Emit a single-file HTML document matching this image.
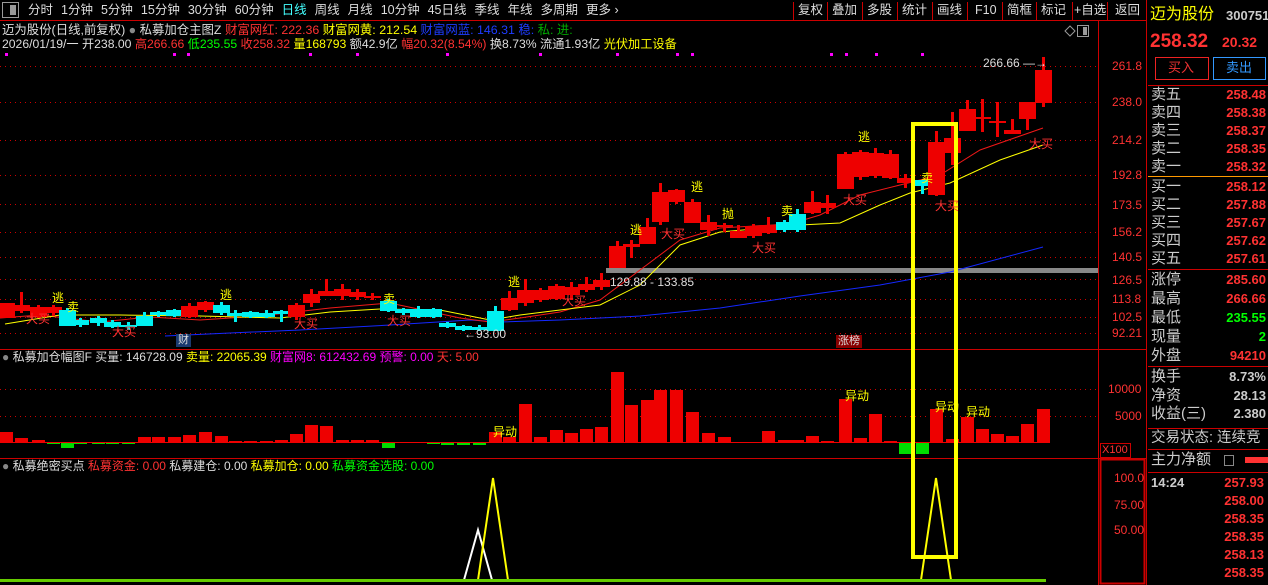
<!DOCTYPE html>
<html><head><meta charset="utf-8"><style>
*{margin:0;padding:0;box-sizing:border-box}
body{width:1268px;height:585px;background:#000;overflow:hidden;position:relative;font-family:"Liberation Sans","Noto Sans CJK SC",sans-serif;font-size:12px;color:#ccc}
.a{position:absolute;white-space:nowrap;line-height:1}
.tb span{margin-right:8px}
.r{color:#ff3232}.y{color:#ffff00}.g{color:#00ff00}.b{color:#1e3cff}.m{color:#ff00ff}.w{color:#ddd}
.ax{position:absolute;left:1112px;color:#ff3232;font-size:12px;line-height:1}
.ob{position:absolute;left:1151px;width:115px;font-size:15px;line-height:1;color:#ccc}
.ob b{position:absolute;right:0;top:1px;font-size:13px;color:#ff3232;font-weight:bold}
.tk{position:absolute;right:4px;font-size:13px;font-weight:bold;color:#ff3232;line-height:1}
.bt{position:absolute;top:4px;font-size:12.5px;color:#ddd;line-height:1}
</style></head><body>
<svg width="1268" height="585" style="position:absolute;left:0;top:0">
<rect x="0" y="0" width="1268" height="585" fill="#000"/>
<line x1="0" y1="20.5" x2="1146" y2="20.5" stroke="#c00" />
<line x1="1098.5" y1="20" x2="1098.5" y2="585" stroke="#c00"/>
<line x1="1146.5" y1="0" x2="1146.5" y2="585" stroke="#c00"/>
<line x1="0" y1="349.5" x2="1146" y2="349.5" stroke="#c00"/>
<line x1="0" y1="458.5" x2="1146" y2="458.5" stroke="#c00"/>
<g stroke="#c00"><line x1="793.5" x2="793.5" y1="2" y2="20"/><line x1="827.5" x2="827.5" y1="2" y2="20"/><line x1="862.5" x2="862.5" y1="2" y2="20"/><line x1="897.5" x2="897.5" y1="2" y2="20"/><line x1="932.5" x2="932.5" y1="2" y2="20"/><line x1="967.5" x2="967.5" y1="2" y2="20"/><line x1="1002.5" x2="1002.5" y1="2" y2="20"/><line x1="1036.5" x2="1036.5" y1="2" y2="20"/><line x1="1072.5" x2="1072.5" y1="2" y2="20"/><line x1="1107.5" x2="1107.5" y1="2" y2="20"/></g>
<rect x="1100.5" y="443.5" width="30" height="14" fill="none" stroke="#c00"/>
<rect x="1100.5" y="459.5" width="44" height="124" fill="none" stroke="#c00" stroke-width="2"/>
<rect x="2.5" y="2.5" width="16" height="15" fill="none" stroke="#999"/>
<rect x="10" y="5" width="6" height="10" fill="#999"/>
<line x1="1148" y1="85.5" x2="1268" y2="85.5" stroke="#c00"/>
<line x1="1148" y1="176.5" x2="1268" y2="176.5" stroke="#f90"/>
<line x1="1148" y1="269.5" x2="1268" y2="269.5" stroke="#c00"/>
<line x1="1148" y1="366.5" x2="1268" y2="366.5" stroke="#c00"/>
<line x1="1148" y1="428.5" x2="1268" y2="428.5" stroke="#c00"/>
<line x1="1148" y1="449.5" x2="1268" y2="449.5" stroke="#c00"/>
<line x1="1148" y1="472.5" x2="1268" y2="472.5" stroke="#c00"/>
<rect x="1155.5" y="57.5" width="53" height="22" fill="none" stroke="#e22"/>
<rect x="1213.5" y="57.5" width="52" height="22" fill="none" stroke="#39f"/>
<rect x="1245" y="457" width="23" height="6" fill="#ff3232"/>
<rect x="1224.5" y="455.5" width="9" height="10" fill="none" stroke="#888"/>
<g id="dyn"></g>
<rect x="1077.5" y="25.5" width="11" height="11" fill="none" stroke="#999"/>
<rect x="1083" y="27" width="4" height="8" fill="#999"/>
<path d="M1070 26 L1075 31 L1070 36 L1065 31Z" fill="none" stroke="#999"/>
</svg>
<div class="a tb" style="left:28px;top:4px;font-size:12.5px;color:#ddd"><span>分时</span><span>1分钟</span><span>5分钟</span><span>15分钟</span><span>30分钟</span><span>60分钟</span><span style="color:#4ff">日线</span><span>周线</span><span>月线</span><span>10分钟</span><span>45日线</span><span>季线</span><span>年线</span><span>多周期</span><span>更多 ›</span></div>
<div class="bt" style="left:798px">复权</div><div class="bt" style="left:832px">叠加</div><div class="bt" style="left:867px">多股</div><div class="bt" style="left:902px">统计</div><div class="bt" style="left:937px">画线</div><div class="bt" style="left:975px">F10</div><div class="bt" style="left:1007px">简框</div><div class="bt" style="left:1041px">标记</div><div class="bt" style="left:1074px">+自选</div><div class="bt" style="left:1115px">返回</div>
<div class="a" style="left:2px;top:24px;font-size:12.4px"><span class="w">迈为股份(日线,前复权) <span style="color:#888">●</span> 私募加仓主图Z </span><span class="r">财富网红: 222.36 </span><span class="y">财富网黄: 212.54 </span><span class="b">财富网蓝: 146.31 稳: </span><span style="color:#0a0">私: 进:</span></div>
<div class="a" style="left:2px;top:38px;font-size:12.2px"><span class="w">2026/01/19/一 开238.00 </span><span class="r">高266.66 </span><span class="g">低235.55 </span><span class="r">收258.32 </span><span class="y">量168793 </span><span class="w">额42.9亿 </span><span class="r">幅20.32(8.54%) </span><span class="w">换8.73% 流通1.93亿 </span><span class="y">光伏加工设备</span></div>
<div class="a" style="left:2px;top:351px;font-size:12px"><span style="color:#888">●</span><span class="w"> 私募加仓幅图F 买量: 146728.09 </span><span class="y">卖量: 22065.39 </span><span class="m">财富网8: 612432.69 预警: 0.00 </span><span class="r">天: 5.00</span></div>
<div class="a" style="left:2px;top:460px;font-size:12px"><span style="color:#888">●</span><span class="w"> 私募绝密买点 </span><span class="r">私募资金: 0.00 </span><span class="w">私募建仓: 0.00 </span><span class="y">私募加仓: 0.00 </span><span class="g">私募资金选股: 0.00</span></div>
<div class="a w" style="left:983px;top:57px;font-size:12px">266.66 —→</div>
<div class="a w" style="left:610px;top:276px;font-size:12px">129.88 - 133.85</div>
<div class="a w" style="left:464px;top:328px;font-size:12px">←93.00</div>
<div class="a w" style="left:176px;top:334px;font-size:11px;background:#1a3a70;padding:1px 2px">财</div>
<div class="a w" style="left:836px;top:335px;font-size:11px;background:#800;padding:1px 2px">涨榜</div>
<div id="lb"></div>
<div class="ax" style="top:60px">261.8</div><div class="ax" style="top:96px">238.0</div><div class="ax" style="top:134px">214.2</div><div class="ax" style="top:169px">192.8</div><div class="ax" style="top:199px">173.5</div><div class="ax" style="top:226px">156.2</div><div class="ax" style="top:251px">140.5</div><div class="ax" style="top:274px">126.5</div><div class="ax" style="top:293px">113.8</div><div class="ax" style="top:311px">102.5</div><div class="ax" style="top:327px">92.21</div>
<div class="ax" style="top:383px;left:1108px">10000</div><div class="ax" style="top:410px;left:1115px">5000</div>
<div class="a r" style="left:1102px;top:445px;font-size:11px">X100</div>
<div class="ax" style="top:472px;left:1114px">100.0</div><div class="ax" style="top:499px;left:1114px">75.00</div><div class="ax" style="top:524px;left:1114px">50.00</div>
<div class="a y" style="left:1150px;top:7px;font-size:16px">迈为股份</div>
<div class="a" style="left:1226px;top:9px;font-size:13px;font-weight:bold;color:#ccc">300751</div>
<div class="a r" style="left:1150px;top:32px;font-size:19px;font-weight:bold">258.32</div>
<div class="a r" style="left:1222px;top:35px;font-size:14px;font-weight:bold">20.32</div>
<div class="a" style="left:1168px;top:61px;font-size:13px;color:#e33">买入</div>
<div class="a" style="left:1226px;top:61px;font-size:13px;color:#39f">卖出</div>
<div class="ob" style="top:87px">卖五<b>258.48</b></div><div class="ob" style="top:105px">卖四<b>258.38</b></div><div class="ob" style="top:123px">卖三<b>258.37</b></div><div class="ob" style="top:141px">卖二<b>258.35</b></div><div class="ob" style="top:159px">卖一<b>258.32</b></div>
<div class="ob" style="top:179px">买一<b>258.12</b></div><div class="ob" style="top:197px">买二<b>257.88</b></div><div class="ob" style="top:215px">买三<b>257.67</b></div><div class="ob" style="top:233px">买四<b>257.62</b></div><div class="ob" style="top:251px">买五<b>257.61</b></div>
<div class="ob" style="top:272px">涨停<b>285.60</b></div><div class="ob" style="top:291px">最高<b>266.66</b></div><div class="ob" style="top:310px">最低<b style="color:#0f0">235.55</b></div><div class="ob" style="top:329px">现量<b style="color:#0f0">2</b></div><div class="ob" style="top:348px">外盘<b>94210</b></div>
<div class="ob" style="top:369px">换手<b style="color:#ccc">8.73%</b></div><div class="ob" style="top:388px">净资<b style="color:#ccc">28.13</b></div><div class="ob" style="top:406px">收益(三)<b style="color:#ccc">2.380</b></div>
<div class="ob" style="top:431px;font-size:14.5px">交易状态: 连续竞</div>
<div class="ob" style="top:452px">主力净额</div>
<div class="a" style="left:1151px;top:476px;font-size:13px;font-weight:bold;color:#ccc">14:24</div>
<div class="tk" style="top:476px">257.93</div><div class="tk" style="top:494px">258.00</div><div class="tk" style="top:512px">258.35</div><div class="tk" style="top:530px">258.35</div><div class="tk" style="top:548px">258.13</div><div class="tk" style="top:566px">258.35</div>
<script>
var g=document.getElementById("dyn"),h="";
[66,102,140,175,204,232,257,279,299,317,333,389,416].forEach(function(y){h+='<line x1="0" x2="1098" y1="'+(y+.5)+'" y2="'+(y+.5)+'" stroke="#c00" stroke-dasharray="1 4"/>';});
[5,173,187,309,356,446,539,616,676,691,830,845,875,921].forEach(function(x){h+='<rect x="'+x+'" y="53" width="3" height="3" fill="#f0f"/>';});
h+='<rect x="606" y="268" width="492" height="5" fill="#888"/>';
var C=[[6,'r',303,318,303,318],[21,'r',305,311,292,313],[38,'r',307,317,305,318],[53,'r',307,313,305,316],[67,'c',310,326,308,326],[80,'c',320,325,318,327],[98,'c',318,323,316,326],[112,'c',322,327,320,328],[128,'c',325,327,322,330],[144,'c',316,326,312,326],[158,'c',312,315,311,317],[174,'c',310,316,309,317],[189,'r',306,317,303,318],[205,'r',302,310,301,312],[221,'c',305,313,302,315],[235,'c',313,316,310,322],[250,'c',312,317,311,318],[266,'c',313,317,310,318],[281,'c',311,314,310,322],[296,'r',305,317,303,320],[311,'r',294,303,289,307],[326,'r',291,296,279,293],[342,'r',289,296,284,300],[357,'r',292,297,289,300],[372,'r',296,298,293,300],[388,'c',301,311,299,312],[403,'c',309,313,308,315],[418,'c',309,317,306,318],[433,'c',309,317,308,318],[447,'c',323,327,322,328],[463,'c',326,330,325,331],[479,'c',327,330,325,331],[495,'c',311,331,306,331],[509,'r',298,310,291,311],[525,'r',290,303,279,306],[540,'r',290,300,288,302],[556,'r',286,299,284,300],[571,'r',287,295,282,300],[586,'r',284,290,277,292],[601,'r',280,287,273,290],[617,'r',246,268,241,268],[631,'r',244,247,240,258],[647,'r',227,244,218,244],[660,'r',192,222,183,225],[676,'r',190,202,189,204],[692,'r',202,223,199,223],[708,'r',222,230,215,236],[724,'r',225,227,223,232],[738,'r',231,238,225,238],[753,'r',226,236,224,238],[768,'r',225,233,217,234],[784,'c',222,230,220,232],[797,'c',214,230,209,232],[812,'r',202,213,191,214],[827,'r',203,208,195,214],[845,'r',154,189,152,189],[860,'r',152,177,150,180],[875,'r',153,176,148,178],[890,'r',154,178,150,179],[905,'r',178,183,174,188],[922,'c',180,186,180,194],[936,'r',142,195,131,196],[952,'r',138,153,112,165],[967,'r',109,131,100,131],[982,'r',117,119,99,132],[997,'r',121,123,102,137],[1012,'r',130,134,119,134],[1027,'r',102,119,102,130],[1043,'r',70,103,57,107]];
function pl(p,c){return '<polyline fill="none" stroke="'+c+'" stroke-width="1" points="'+p+'"/>';}
h+=pl("165,336 230,333 300,330 390,325 470,320 500,322 560,320 640,316 720,308 800,296 880,285 950,272 1043,247","#1428ff");
h+=pl("0,318 40,315 100,322 150,317 200,320 260,316 330,308 390,303 460,318 490,322 520,318 560,312 600,300 640,270 680,240 720,228 790,224 820,215 860,195 900,185 940,175 980,150 1043,128","#f01818");
h+=pl("5,324 60,315 120,315 200,316 280,318 330,312 380,309 440,310 490,320 520,315 600,305 640,285 680,245 720,232 800,225 840,223 880,205 910,193 950,183 1000,160 1043,145","#ffff00");
var V={6:10,21:4,38:2,53:-2,67:-6,80:-2,98:-2,112:-2,128:-2,144:5,158:5,174:5,189:7,205:10,221:6,235:1,250:1,266:1,281:2,296:8,311:17,326:16,342:2,357:2,372:2,388:-6,403:-1,418:-1,433:-2,447:-3,463:-3,479:-3,495:10,509:5,525:38,540:5,556:12,571:9,586:13,601:15,617:70,631:37,647:42,660:52,676:52,692:30,708:9,724:5,738:-1,753:-1,768:11,784:2,797:2,812:6,827:1,845:43,860:4,875:28,890:1,905:-12,922:-12,936:33,952:3,967:25,982:13,997:8,1012:6,1027:18,1043:33};
C.forEach(function(c){var x=c[0],col=c[1]=='r'?'#ee0000':'#00f0f0';
h+='<rect x="'+(x-1)+'" y="'+c[4]+'" width="3" height="'+(c[5]-c[4])+'" fill="'+col+'"/>';
h+='<rect x="'+(x-8)+'" y="'+c[2]+'" width="17" height="'+Math.max(2,c[3]-c[2])+'" fill="'+col+'"/>';
var v=V[x]||1;if(v>0)h+='<rect x="'+(x-6)+'" y="'+(442-v)+'" width="13" height="'+v+'" fill="#e00"/>';else h+='<rect x="'+(x-6)+'" y="442" width="13" height="'+(-v)+'" fill="#0d0"/>';});
h+='<line x1="0" x2="1050" y1="442.5" y2="442.5" stroke="#e00"/>';
h+='<rect x="913" y="124" width="43" height="433" fill="none" stroke="#ffff00" stroke-width="4"/>';
h+='<polyline points="464,580 478,530 492,580" fill="none" stroke="#fff" stroke-width="2"/>';
h+='<polyline points="478,580 493,478 508,580" fill="none" stroke="#ffff00" stroke-width="2"/>';
h+='<polyline points="921,580 936,478 951,580" fill="none" stroke="#ffff00" stroke-width="2"/>';
h+='<rect x="0" y="579" width="1046" height="3" fill="#6c0"/>';
g.innerHTML=h;
var L=[["逃",52,292,"y"],["逃",220,289,"y"],["逃",508,276,"y"],["逃",630,224,"y"],["逃",691,181,"y"],["逃",858,131,"y"],["卖",67,301,"y"],["卖",383,293,"y"],["卖",781,205,"y"],["卖",921,172,"y"],["抛",722,208,"y"],["大买",26,313,"r"],["大买",112,326,"r"],["大买",294,318,"r"],["大买",387,315,"r"],["大买",562,295,"r"],["大买",661,228,"r"],["大买",752,242,"r"],["大买",843,194,"r"],["大买",1029,138,"r"],["大买",935,200,"r"],["异动",493,426,"y"],["异动",845,390,"y"],["异动",935,401,"y"],["异动",966,406,"y"]],s="";
L.forEach(function(l){s+='<div class="a '+l[3]+'" style="left:'+l[1]+'px;top:'+l[2]+'px;font-size:12px">'+l[0]+'</div>';});
document.getElementById("lb").innerHTML=s;
</script>
</body></html>
